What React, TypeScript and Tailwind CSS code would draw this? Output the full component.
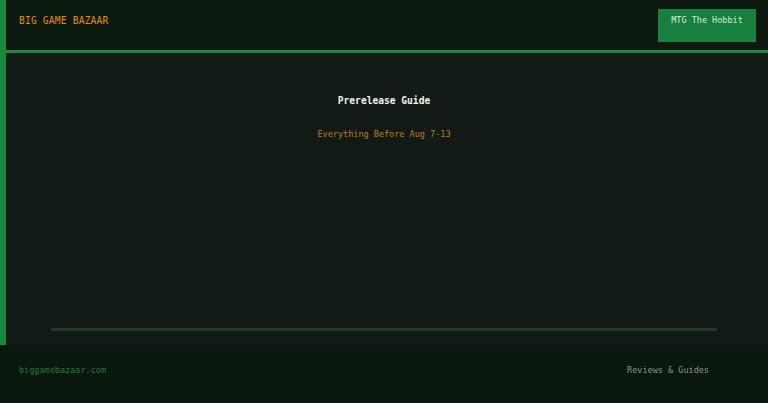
export default function App() {
  return (
    <div className="flex h-[403px] w-full flex-col font-['DejaVu_Sans_Mono',monospace] bg-[#111a14]">
      <header className="flex h-[53px] shrink-0 items-start justify-between border-b-[3px] border-[#178a3e] bg-[#0b190e] pl-[19px] pr-[12px] shadow-[inset_6px_0_0_#178a3e]">
        <div className="pt-[15px] text-[9.6px] font-normal leading-[12px] tracking-[0.02em] text-[#e88c00]">
          BIG GAME BAZAAR
        </div>
        <button className="mt-[9px] flex h-[33px] w-[98px] items-start justify-center self-start bg-[#17803e] pt-[5px] text-[8.5px] leading-[12px] text-[#d4ecd6]">
          MTG The Hobbit
        </button>
      </header>
      <main className="flex flex-1 flex-col items-center px-[51px] shadow-[inset_6px_0_0_#178a3e]">
        <h1 className="mt-[42px] text-[9.6px] font-bold leading-[12px] text-[#f2f2f2]">
          Prerelease Guide
        </h1>
        <p className="mt-[21px] text-[8.5px] leading-[12px] text-[#c27a12]">
          Everything Before Aug 7-13
        </p>
        <div className="mt-auto mb-[14px] h-[3px] w-full bg-[#1f3b24]" />
      </main>
      <footer className="flex h-[58px] shrink-0 items-start justify-between bg-[#0a170d] pl-[19px] pr-[59px] pt-[19px] text-[8.5px] leading-[12px]">
        <span className="text-[#1f7a3a]">biggamebazaar.com</span>
        <span className="text-[#8a968c]">Reviews &amp; Guides</span>
      </footer>
    </div>
  );
}
